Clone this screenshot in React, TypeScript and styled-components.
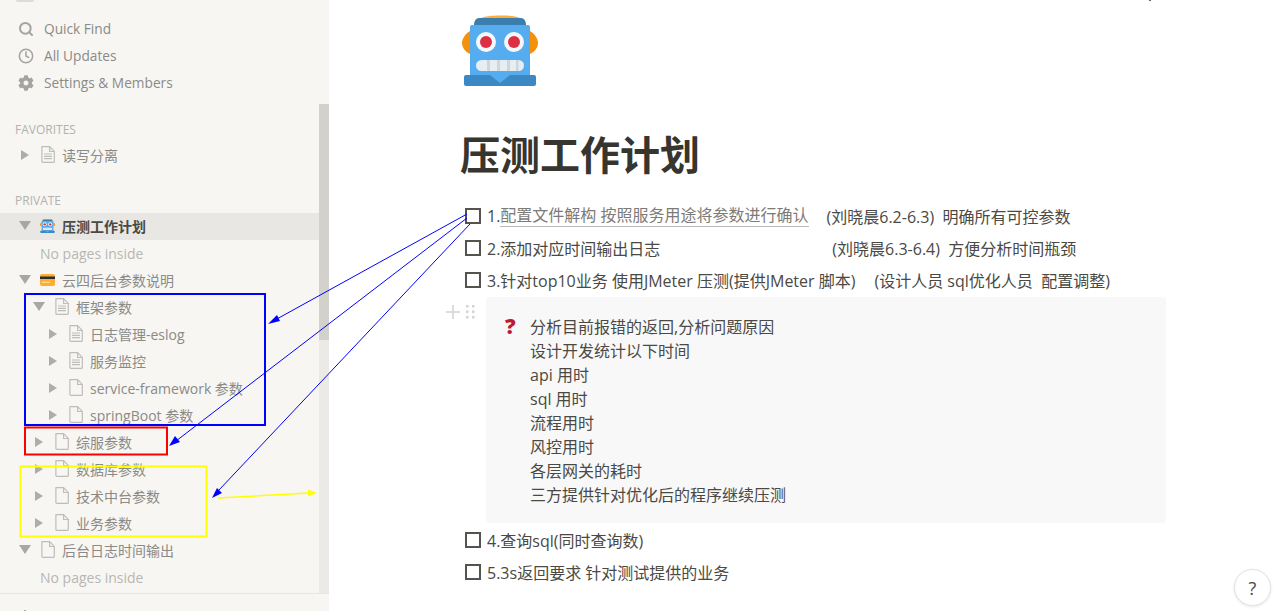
import React from 'react';
import styled, { createGlobalStyle } from 'styled-components';
import { Search, Clock } from 'lucide-react';
import { FaCog } from 'react-icons/fa';

const GlobalStyle = createGlobalStyle`
  html, body { margin: 0; padding: 0; height: 100%; overflow: hidden; background: #fff; }
  #root { height: 100%; }
`;

const FONT = `"Open Sans", "Noto Sans", "Noto Sans CJK SC", sans-serif`;

const Page = styled.div`
  position: relative;
  display: flex;
  width: 1283px;
  height: 611px;
  overflow: hidden;
  font-family: ${FONT};
  color: #37352f;
`;

const Sidebar = styled.aside`
  width: 329px;
  flex: none;
  display: flex;
  flex-direction: column;
  background: #f7f6f3;
  color: #8b8a86;
  font-size: 14px;
`;

const TopNav = styled.div`
  flex: none;
  height: 104px;
  box-sizing: border-box;
`;

const WorkspaceStub = styled.div`
  width: 18px;
  height: 2px;
  margin: 0 0 13px 16px;
  border-radius: 0 0 3px 3px;
  background: #dddcd8;
`;

const NavRow = styled.div`
  display: flex;
  align-items: center;
  height: 27px;
  padding-left: 17px;
  gap: 10px;
  font-size: 13.7px;
  color: #8b8a86;
`;

const NavIcon = styled.span`
  width: 17px;
  display: flex;
  justify-content: center;
  color: #a5a4a0;
`;

const ScrollArea = styled.div`
  flex: 1;
  min-height: 0;
  display: flex;
`;

const Tree = styled.div`
  flex: 1;
  min-width: 0;
  padding-top: 13px;
  overflow: hidden;
`;

const SectionLabel = styled.div<{ $gap?: number }>`
  height: 25px;
  margin-top: ${p => p.$gap ?? 0}px;
  padding-left: 15px;
  display: flex;
  align-items: center;
  font-size: 12px;
  color: #b3b2ae;
`;

const TreeRow = styled.div<{ $level: number; $active?: boolean }>`
  display: flex;
  align-items: center;
  box-sizing: border-box;
  height: 27px;
  padding: 0 0 2px ${p => 19 + p.$level * 14}px;
  background: ${p => (p.$active ? '#e8e7e4' : 'transparent')};
  color: ${p => (p.$active ? '#4a4944' : '#8b8a86')};
  font-weight: ${p => (p.$active ? 700 : 400)};
  font-size: 14px;
  white-space: nowrap;
`;

const Toggle = styled.span<{ $open?: boolean }>`
  width: 0;
  height: 0;
  flex: none;
  margin-right: ${p => (p.$open ? '9px' : '11px')};
  ${p =>
    p.$open
      ? `border-left: 6px solid transparent; border-right: 6px solid transparent; border-top: 9px solid #a8a7a3;`
      : `margin-left: 2px; border-top: 5px solid transparent; border-bottom: 5px solid transparent; border-left: 8px solid #aeada9;`}
`;

const RowIcon = styled.span`
  width: 15px;
  height: 18px;
  flex: none;
  margin-right: 7px;
  display: flex;
  align-items: center;
  justify-content: center;
`;

const EmptyNote = styled.div`
  display: flex;
  align-items: center;
  height: 27px;
  box-sizing: border-box;
  padding: 0 0 1px 40px;
  font-size: 14px;
  color: #b7b6b2;
`;

const Track = styled.div`
  width: 10px;
  flex: none;
  background: #ebeae7;
`;

const Thumb = styled.div`
  height: 236px;
  background: #d3d1cb;
`;

const Footer = styled.div`
  flex: none;
  height: 18px;
  box-sizing: border-box;
  border-top: 1px solid #e6e5e2;
`;

const Main = styled.main`
  flex: 1;
  min-width: 0;
  box-sizing: border-box;
  padding: 15px 117px 0 131px;
  font-size: 16px;
  color: #4a4944;
`;

const PageIcon = styled.div`
  height: 71px;
  margin-left: 2px;
`;

const Title = styled.h1`
  margin: 43px 0 19px;
  height: 52px;
  line-height: 52px;
  font-size: 40px;
  font-weight: 700;
  color: #37352f;
`;

const Todo = styled.div`
  display: flex;
  align-items: center;
  height: 32px;
  white-space: pre;
`;

const Check = styled.span`
  width: 16px;
  height: 16px;
  flex: none;
  box-sizing: border-box;
  margin: 0 6px 0 5px;
  border: 2px solid #55534e;
`;

const LinkText = styled.span`
  border-bottom: 1px solid #b9b8b4;
  color: #7c7b77;
  line-height: 21px;
`;

const Spaced = styled.span<{ $left: number }>`
  margin-left: ${p => p.$left}px;
`;

const CalloutWrap = styled.div`
  position: relative;
  margin: 1px 0 1px 26px;
`;

const Callout = styled.div`
  display: flex;
  box-sizing: border-box;
  height: 226px;
  padding: 18px 0 0 18px;
  background: #f8f8f8;
  border-radius: 3px;
`;

const CalloutEmoji = styled.span`
  width: 25px;
  flex: none;
  height: 24px;
  margin-left: 1px;
  line-height: 22px;
  font-size: 21px;
  font-weight: 800;
  color: #be1931;
`;

const CalloutLines = styled.div`
  line-height: 24px;
`;

const BlockHandles = styled.div`
  position: absolute;
  left: -40px;
  top: 7px;
  display: flex;
  align-items: center;
  gap: 5px;
  color: #d5d4d1;
`;

const HelpButton = styled.button`
  position: absolute;
  right: 12px;
  bottom: 5px;
  width: 37px;
  height: 37px;
  padding: 0;
  border-radius: 50%;
  border: 1px solid #e3e2e0;
  background: #fff;
  box-shadow: 0 1px 3px rgba(15, 15, 15, 0.1);
  font-family: ${FONT};
  font-size: 18px;
  color: #4a4944;
`;

const Overlay = styled.svg`
  position: absolute;
  inset: 0;
  pointer-events: none;
`;

const Doc = ({ lines }: { lines?: boolean }) => (
  <svg width="14" height="17" viewBox="0 0 14 17" fill="none" stroke="#bebdb9" strokeWidth="1.2">
    <path d="M1 .7h7.6L13.3 5.4V15.4a1 1 0 0 1-1 1H1.9a1 1 0 0 1-1-1V1.6a1 1 0 0 1 .1-.9z" />
    <path d="M8.6.9v4.6h4.6" />
    {lines && <path d="M3 8h8M3 10.3h8M3 12.6h8" />}
  </svg>
);

const Robot = ({ width, height }: { width: number; height: number }) => (
  <svg width={width} height={height} viewBox="0 0 76 71">
    <path d="M19 3C25-.5 52-.5 58 3z" fill="#ffac33" />
    <path d="M8 16C3 19 0 24 0 28c0 4 3 9 8 11z" fill="#f4900c" />
    <path d="M68 16c5 3 8 8 8 12 0 4-3 9-8 11z" fill="#f4900c" />
    <path d="M17 3h42c3 0 5 3 5 7H12c0-4 2-7 5-7z" fill="#3a7dae" />
    <rect x="8" y="10" width="60" height="55" rx="2" fill="#55acee" />
    <circle cx="24" cy="27" r="10" fill="#f5f8fa" />
    <circle cx="52" cy="27" r="10" fill="#f5f8fa" />
    <circle cx="24" cy="27" r="6" fill="#dd2e44" />
    <circle cx="52" cy="27" r="6" fill="#dd2e44" />
    <rect x="14" y="45" width="48" height="11" rx="5.5" fill="#e8edf2" />
    <path d="M25 45h3v11h-3zM35 45h3v11h-3zM45 45h3v11h-3zM54 45h2.500v11H54z" fill="#ccd6dd" />
    <path d="M4 60h68a2 2 0 0 1 2 2v7a2 2 0 0 1-2 2H4a2 2 0 0 1-2-2v-7a2 2 0 0 1 2-2z" fill="#3b88c3" />
    <path d="M28 60h20l-10 8z" fill="#55acee" />
  </svg>
);

const Card = () => (
  <svg width="15" height="12" viewBox="0 0 15 12">
    <rect width="15" height="12" rx="2" fill="#ffac33" />
    <rect y="2.500" width="15" height="2.500" fill="#292f33" />
    <rect x="2" y="7.500" width="8" height="1.500" fill="#ffd983" />
  </svg>
);

const Handle = () => (
  <svg width="10" height="15" viewBox="0 0 10 15" fill="#d5d4d1">
    {[1, 7].map(x => [1, 6.500, 12].map(y => <rect key={`${x}-${y}`} x={x} y={y} width="2.500" height="2.500" />))}
  </svg>
);

type Node = { label: string; level: number; open?: boolean; icon: 'doc' | 'lines' | 'robot' | 'card'; active?: boolean };

const privatePages: (Node | { empty: true })[] = [
  { label: '压测工作计划', level: 0, open: true, icon: 'robot', active: true },
  { empty: true },
  { label: '云四后台参数说明', level: 0, open: true, icon: 'card' },
  { label: '框架参数', level: 1, open: true, icon: 'lines' },
  { label: '日志管理-eslog', level: 2, icon: 'lines' },
  { label: '服务监控', level: 2, icon: 'lines' },
  { label: 'service-framework 参数', level: 2, icon: 'doc' },
  { label: 'springBoot 参数', level: 2, icon: 'doc' },
  { label: '综服参数', level: 1, icon: 'doc' },
  { label: '数据库参数', level: 1, icon: 'doc' },
  { label: '技术中台参数', level: 1, icon: 'doc' },
  { label: '业务参数', level: 1, icon: 'doc' },
  { label: '后台日志时间输出', level: 0, open: true, icon: 'doc' },
  { empty: true },
];

const TreeItem = ({ node }: { node: Node }) => (
  <TreeRow $level={node.level} $active={node.active}>
    <Toggle $open={node.open} />
    <RowIcon>
      {node.icon === 'robot' && <Robot width={15} height={14} />}
      {node.icon === 'card' && <Card />}
      {node.icon === 'doc' && <Doc />}
      {node.icon === 'lines' && <Doc lines />}
    </RowIcon>
    {node.label}
  </TreeRow>
);

const calloutLines = ['分析目前报错的返回,分析问题原因', '设计开发统计以下时间', 'api 用时', 'sql 用时', '流程用时', '风控用时', '各层网关的耗时', '三方提供针对优化后的程序继续压测'];

export default function App() {
  return (
    <Page>
      <GlobalStyle />
      <Sidebar>
        <TopNav>
          <WorkspaceStub />
          <NavRow><NavIcon><Search size={16} strokeWidth={3} /></NavIcon>Quick Find</NavRow>
          <NavRow><NavIcon><Clock size={16} strokeWidth={2.3} /></NavIcon>All Updates</NavRow>
          <NavRow><NavIcon><FaCog size={16} /></NavIcon>Settings &amp; Members</NavRow>
        </TopNav>
        <ScrollArea>
          <Tree>
            <SectionLabel>FAVORITES</SectionLabel>
            <TreeItem node={{ label: '读写分离', level: 0, icon: 'lines' }} />
            <SectionLabel $gap={19}>PRIVATE</SectionLabel>
            {privatePages.map((n, i) =>
              'empty' in n ? <EmptyNote key={i}>No pages inside</EmptyNote> : <TreeItem key={i} node={n} />
            )}
          </Tree>
          <Track><Thumb /></Track>
        </ScrollArea>
        <Footer />
      </Sidebar>
      <Main>
        <PageIcon><Robot width={76} height={71} /></PageIcon>
        <Title>压测工作计划</Title>
        <Todo><Check />1.<LinkText>配置文件解构 按照服务用途将参数进行确认</LinkText><Spaced $left={18}>(刘晓晨6.2-6.3)  明确所有可控参数</Spaced></Todo>
        <Todo><Check />2.添加对应时间输出日志<Spaced $left={172}>(刘晓晨6.3-6.4)  方便分析时间瓶颈</Spaced></Todo>
        <Todo><Check />3.针对top10业务 使用JMeter 压测(提供JMeter 脚本)<Spaced $left={19}>(设计人员 sql优化人员  配置调整)</Spaced></Todo>
        <CalloutWrap>
          <BlockHandles>
            <svg width="14" height="14" viewBox="0 0 14 14" stroke="#d5d4d1" strokeWidth="1.6"><path d="M7 0v14M0 7h14" /></svg>
            <Handle />
          </BlockHandles>
          <Callout>
            <CalloutEmoji>?</CalloutEmoji>
            <CalloutLines>
              {calloutLines.map(l => <div key={l}>{l}</div>)}
            </CalloutLines>
          </Callout>
        </CalloutWrap>
        <Todo><Check />4.查询sql(同时查询数)</Todo>
        <Todo><Check />5.3s返回要求 针对测试提供的业务</Todo>
      </Main>
      <HelpButton>?</HelpButton>
      <Overlay width="1283" height="611" fill="none">
        <rect x="25" y="294" width="240" height="131" stroke="#0000ff" strokeWidth="2" />
        <rect x="25" y="427.500" width="142" height="27" stroke="#ff0000" strokeWidth="2" />
        <rect x="20.500" y="466.500" width="186" height="70" stroke="#ffff00" strokeWidth="2" />
        <g stroke="#0000ff" strokeWidth="1">
          <path d="M467 214L275 320" />
          <path d="M467 218L176 441" />
          <path d="M470 224L219 490" />
        </g>
        <g fill="#0000ff">
          <path d="M268 324l9-9 3 6z" />
          <path d="M169 446l6-10 5 6z" />
          <path d="M212 498l5-10 5 5z" />
        </g>
        <path d="M218 498L309 493" stroke="#ffff00" strokeWidth="1.500" />
        <path d="M317 493l-9-3.500v7z" fill="#ffff00" />
        <rect x="1149" y="0" width="2" height="1" fill="#666" />
        <rect x="24" y="610" width="2" height="1" fill="#aaa" />
      </Overlay>
    </Page>
  );
}
